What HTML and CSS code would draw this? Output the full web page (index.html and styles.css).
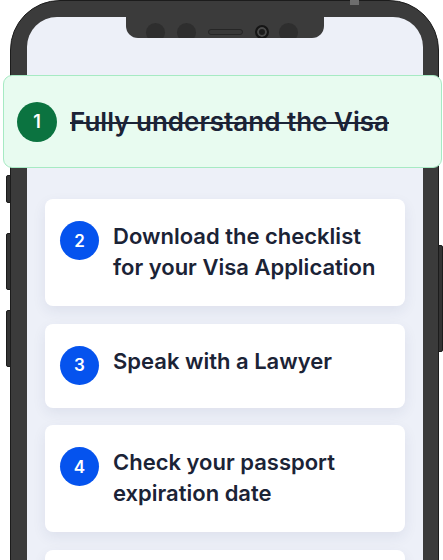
FILE: index.html
```html
<!DOCTYPE html>
<html lang="en">
<head>
  <meta charset="UTF-8" />
  <meta name="viewport" content="width=device-width, initial-scale=1.0"/>
  <title>Visa Steps</title>
  <link rel="stylesheet" href="styles.css">
</head>
<body>
  <div class="stage">
    <span class="btn btn-top"></span>
    <span class="btn btn-left btn-mute"></span>
    <span class="btn btn-left btn-vol-up"></span>
    <span class="btn btn-left btn-vol-down"></span>
    <span class="btn btn-right"></span>

    <div class="phone">
      <div class="screen">
        <div class="notch">
          <div class="notch-row">
            <span class="dot"></span>
            <span class="dot"></span>
            <span class="speaker"></span>
            <span class="camera"></span>
            <span class="dot"></span>
          </div>
        </div>

        <div class="list">
          <div class="card">
            <span class="num">2</span>
            <p class="step">Download the checklist for your Visa Application</p>
          </div>
          <div class="card">
            <span class="num">3</span>
            <p class="step">Speak with a Lawyer</p>
          </div>
          <div class="card">
            <span class="num">4</span>
            <p class="step">Check your passport expiration date</p>
          </div>
          <!-- next step, only its top edge shows -->
          <div class="card card-next"></div>
        </div>
      </div>
    </div>

    <div class="card-done">
      <span class="num num-done">1</span>
      <p class="step step-done">Fully understand the Visa</p>
    </div>
  </div>
</body>
</html>
```

FILE: styles.css
```css
body {
  margin: 0;
  background: #ffffff;
  font-family: Inter, "Noto Sans", sans-serif;
}
.stage {
  position: relative;
  width: 443px;
  height: 560px;
  overflow: hidden;
}
.phone {
  margin-left: 10px;
  width: 429px;
  height: 660px;
  box-sizing: border-box;
  background: #3b3b3b;
  border: 1px solid #1c1c1c;
  border-radius: 50px;
  padding: 16px 15px 0 16px;
}
.screen {
  height: 100%;
  background: #edf0f8;
  border-radius: 30px 30px 0 0;
  overflow: hidden;
}
.notch {
  width: 198px;
  height: 21px;
  margin: 0 auto;
  background: #3b3b3b;
  border-radius: 0 0 12px 12px;
  overflow: hidden;
}
.notch-row {
  height: 30px;
  display: flex;
  align-items: center;
  gap: 12px;
  padding-left: 20px;
}
.dot {
  width: 19px;
  height: 19px;
  border-radius: 50%;
  background: #2e2e2e;
}
.speaker {
  width: 33px;
  height: 4px;
  border: 1px solid #262626;
  border-radius: 3px;
  background: #383838;
}
.camera {
  width: 10px;
  height: 10px;
  border-radius: 50%;
  background: #1c1c1c;
  border: 2px solid #151515;
  box-shadow: inset 0 0 0 2px #4a4a4a;
  margin-right: -2px;
}
.list {
  padding: 161px 18px 0;
  display: flex;
  flex-direction: column;
  gap: 17.5px;
}
.card {
  background: #ffffff;
  border-radius: 8px;
  padding: 22px 15px 23px;
  display: flex;
  align-items: flex-start;
  gap: 14px;
  box-shadow: 0 5px 14px rgba(40, 52, 100, 0.08);
}
.card-next {
  height: 84px;
  box-sizing: border-box;
}
.num {
  flex: none;
  width: 39px;
  height: 39px;
  border-radius: 50%;
  background: #0553ee;
  color: #ffffff;
  font-weight: 600;
  font-size: 17px;
  display: flex;
  align-items: center;
  justify-content: center;
}
.step {
  margin: 0;
  font-weight: 600;
  font-size: 22px;
  line-height: 31px;
  color: #1b2336;
}
.card-done {
  position: absolute;
  left: 3px;
  top: 75px;
  width: 439px;
  height: 93px;
  box-sizing: border-box;
  background: #e8fbf0;
  border: 1px solid #a6eac3;
  border-radius: 9px;
  display: flex;
  align-items: center;
  gap: 13px;
  padding-left: 13px;
}
.num-done {
  width: 40px;
  height: 40px;
  background: #0b7340;
  font-size: 18px;
}
.step-done {
  font-size: 26px;
  text-decoration: line-through;
  text-decoration-thickness: 2px;
}
.btn {
  position: absolute;
  background: #333333;
  border: 1px solid #1c1c1c;
  box-sizing: border-box;
}
.btn-left {
  left: 6px;
  width: 5px;
  border-radius: 2px 0 0 2px;
}
.btn-mute {
  top: 175px;
  height: 28px;
}
.btn-vol-up {
  top: 233px;
  height: 57px;
}
.btn-vol-down {
  top: 310px;
  height: 57px;
}
.btn-right {
  left: 438px;
  top: 245px;
  width: 5px;
  height: 107px;
  border-radius: 0 2px 2px 0;
}
.btn-top {
  left: 350px;
  top: 0;
  width: 9px;
  height: 5px;
  background: #6e6e6e;
  border: none;
}
```
